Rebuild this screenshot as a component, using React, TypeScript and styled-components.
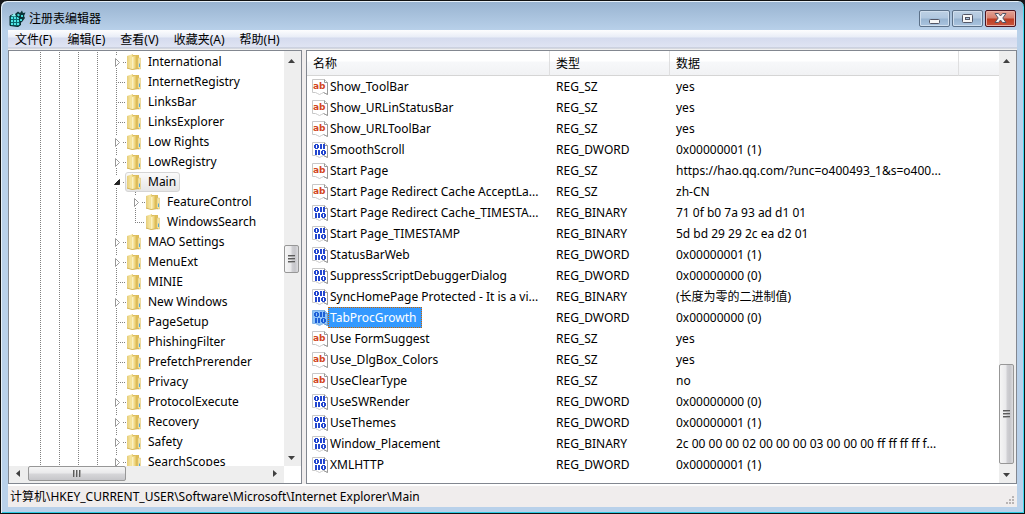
import React from "react";
import styled, { createGlobalStyle, css } from "styled-components";

const GlobalStyle = createGlobalStyle`
  * { box-sizing: border-box; }
  body {
    margin: 0;
    background: #16181c;
    color: #000;
    font: 12px/20px "Noto Sans", "Noto Sans CJK SC", sans-serif;
  }
  button { font: inherit; color: inherit; margin: 0; }
`;

/* ---------- window frame ---------- */

const Frame = styled.div`
  display: flex;
  flex-direction: column;
  height: 100vh;
  min-height: 300px;
  padding: 0 6px 6px;
  border: 1px solid #111;
  border-radius: 7px 7px 0 0;
  background: linear-gradient(#98b3d0 0, #b9d1ea 30px, #b9d1ea 100%);
  box-shadow: inset 1px 1px 0 #e6f0f8, inset -1px 0 0 #3fd8ee, inset 0 -1px 0 #2cc9e2;
`;

const TitleBar = styled.header`
  display: flex;
  align-items: center;
  gap: 3px;
  flex: none;
  height: 29px;
  padding: 6px 2px 0 2px;
`;

const Title = styled.h1`
  flex: 1;
  margin: 0;
  font-size: 12px;
  font-weight: 400;
  line-height: 20px;
`;

const WindowButtons = styled.div`
  display: flex;
  gap: 2px;
  height: 18px;
`;

const WindowButton = styled.button<{ $close?: boolean }>`
  display: grid;
  place-items: center;
  width: 31px;
  height: 17px;
  padding: 0;
  border: 1px solid ${(p) => (p.$close ? "#4b1420" : "#5c7189")};
  border-radius: 2px;
  background: ${(p) =>
    p.$close
      ? "linear-gradient(#e3a294 0, #d6806f 7px, #bd3c22 8px, #c9553c 100%)"
      : "linear-gradient(#bdd0e4 0, #b0c7df 7px, #98b4d1 8px, #aac4df 100%)"};
  box-shadow: inset 0 0 0 1px ${(p) => (p.$close ? "#e9aea3" : "#cfdeee")};
`;

const Client = styled.div`
  display: flex;
  flex-direction: column;
  flex: 1;
  min-height: 0;
  margin: 0 1px;
  background: #f0eded;
`;

const MenuBar = styled.nav`
  display: flex;
  gap: 1px;
  flex: none;
  height: 20px;
  background: linear-gradient(#fdfdfe 0, #e9edf7 7px, #d5dbee 8px, #dfe4f3 17px, #b9bfce 18px, #f0f0f0 19px);
`;

const MenuItem = styled.button`
  padding: 0 7px;
  border: 0;
  background: none;
  line-height: 20px;
  white-space: nowrap;
`;

const Panes = styled.main`
  display: grid;
  grid-template-columns: 294px minmax(0, 1fr);
  gap: 4px;
  flex: 1;
  min-height: 0;
`;

const Pane = styled.section`
  display: grid;
  grid-template-columns: minmax(0, 1fr) 17px;
  grid-template-rows: minmax(0, 1fr) auto;
  min-height: 0;
  border: 1px solid #828790;
  background: #fff;
  overflow: hidden;
`;

/* ---------- scroll bars ---------- */

const Track = styled.div<{ $horizontal?: boolean }>`
  display: flex;
  flex-direction: ${(p) => (p.$horizontal ? "row" : "column")};
  align-items: center;
  padding: ${(p) => (p.$horizontal ? "0 1px 2px" : "2px 2px 0 0")};
  background: #eee;
  min-width: 0;
  min-height: 0;
`;

const ArrowButton = styled.button<{ $horizontal?: boolean }>`
  display: grid;
  place-items: center;
  flex: none;
  width: ${(p) => (p.$horizontal ? 17 : 15)}px;
  height: ${(p) => (p.$horizontal ? 15 : 17)}px;
  padding: 0;
  border: 0;
  background: none;
`;

const Spacer = styled.div<{ $grow: number }>`
  flex: ${(p) => p.$grow} 1 0;
`;

const Thumb = styled.div<{ $horizontal?: boolean; $size: number }>`
  display: grid;
  place-items: center;
  flex: none;
  border: 1px solid #979797;
  border-radius: 2px;
  ${(p) =>
    p.$horizontal
      ? css`
          width: ${p.$size}px;
          height: 15px;
          background: linear-gradient(#f5f5f5 0, #e9e9eb 6px, #d6d6d9 7px, #c6c6ca 100%);
        `
      : css`
          width: 15px;
          height: ${p.$size}px;
          background: linear-gradient(90deg, #f5f5f5 0, #e9e9eb 6px, #d0d0d4 7px, #c6c6ca 10px, #dcdcdf 100%);
        `}
`;

const arrows = {
  up: "M0 5 3.5 1 7 5Z",
  down: "M0 2h7L3.5 6Z",
  left: "M5 0v7L1 3.5Z",
  right: "M2 0v7L6 3.5Z",
};

function Arrow({ dir }: { dir: keyof typeof arrows }) {
  return (
    <svg width="7" height="7" viewBox="0 0 7 7" aria-hidden="true">
      <path d={arrows[dir]} fill="#404040" />
    </svg>
  );
}

function Grip({ horizontal }: { horizontal?: boolean }) {
  return (
    <svg width="8" height="8" viewBox="0 0 8 8" shapeRendering="crispEdges" aria-hidden="true">
      {[0, 3, 6].map((n) =>
        horizontal ? (
          <g key={n}>
            <rect x={n} y="0" width="1" height="7" fill="#5c5c5c" />
            <rect x={n + 1} y="0" width="1" height="7" fill="#a9a9a9" />
          </g>
        ) : (
          <g key={n}>
            <rect x="0" y={n} width="7" height="1" fill="#5c5c5c" />
            <rect x="0" y={n + 1} width="7" height="1" fill="#a9a9a9" />
          </g>
        ),
      )}
    </svg>
  );
}

type ScrollBarProps = { horizontal?: boolean; size: number; before: number; after: number };

function ScrollBar({ horizontal, size, before, after }: ScrollBarProps) {
  return (
    <Track $horizontal={horizontal}>
      <ArrowButton $horizontal={horizontal} aria-label={horizontal ? "向左滚动" : "向上滚动"}>
        <Arrow dir={horizontal ? "left" : "up"} />
      </ArrowButton>
      <Spacer $grow={before} />
      <Thumb $horizontal={horizontal} $size={size}>
        <Grip horizontal={horizontal} />
      </Thumb>
      <Spacer $grow={after} />
      <ArrowButton $horizontal={horizontal} aria-label={horizontal ? "向右滚动" : "向下滚动"}>
        <Arrow dir={horizontal ? "right" : "down"} />
      </ArrowButton>
    </Track>
  );
}

/* ---------- key tree ---------- */

const Tree = styled.ul`
  margin: 0;
  padding: 1px 0 0 22px;
  list-style: none;
  overflow: hidden;
`;

const TreeRow = styled.li`
  display: flex;
  align-items: center;
  height: 20px;
`;

const TreeCell = styled.svg`
  flex: none;
  width: 19px;
  height: 20px;
`;

const TreeLabel = styled.span<{ $selected?: boolean }>`
  display: flex;
  align-items: center;
  gap: 7px;
  height: 20px;
  margin-left: -1px;
  padding: 0 3px 0 1px;
  border: 1px solid ${(p) => (p.$selected ? "#d5d5d5" : "transparent")};
  border-radius: 3px;
  background: ${(p) => (p.$selected ? "linear-gradient(#fafafa, #e6e6e6)" : "none")};
  line-height: 18px;
  white-space: nowrap;
`;

const dots = { stroke: "#808080", strokeDasharray: "1 1", shapeRendering: "crispEdges" as const };

function Guide() {
  return (
    <TreeCell viewBox="0 0 19 20" aria-hidden="true">
      <path d="M9.5 0V20" {...dots} />
    </TreeCell>
  );
}

type BranchState = "closed" | "open" | "leaf" | "last";

function Branch({ state }: { state: BranchState }) {
  if (state === "leaf" || state === "last") {
    return (
      <TreeCell viewBox="0 0 19 20" aria-hidden="true">
        <path d={state === "leaf" ? "M9.5 0V20" : "M9.5 0V11"} {...dots} />
        <path d="M11 10.5H19" {...dots} />
      </TreeCell>
    );
  }
  return (
    <TreeCell viewBox="0 0 19 20" aria-hidden="true">
      <path d="M9.5 0V4M9.5 16V20M16 10.5H19" {...dots} />
      {state === "closed" ? (
        <path d="M8.5 6.5V14.5L12.5 10.5Z" fill="#fff" stroke="#999" />
      ) : (
        <path d="M12.5 7.5V12.5H7.5Z" fill="#262626" stroke="#262626" strokeLinejoin="round" />
      )}
    </TreeCell>
  );
}

const FolderSvg = styled.svg`
  flex: none;
`;

function FolderIcon() {
  return (
    <FolderSvg width="14" height="16" viewBox="0 0 14 16" aria-hidden="true">
      <defs>
        <linearGradient id="folderBack" x1="0" x2="1" y1="0" y2="0">
          <stop offset="0" stopColor="#e6cd7a" />
          <stop offset="0.7" stopColor="#f8e8a4" />
          <stop offset="1" stopColor="#e2c565" />
        </linearGradient>
        <linearGradient id="folderFront" x1="0" x2="1" y1="0" y2="0">
          <stop offset="0" stopColor="#fdf7d2" />
          <stop offset="0.5" stopColor="#f0d987" />
          <stop offset="1" stopColor="#d9b44a" />
        </linearGradient>
      </defs>
      <path d="M6 1H12V15H6Z" fill="#dcbd5c" />
      <path d="M11 4H13.500V15H11Z" fill="#f3e5a6" stroke="#dcc06a" strokeWidth=".5" />
      <path d="M0 2 6 0V15L0 14.500Z" fill="url(#folderBack)" />
      <path d="M5 3 10 1V14L6 16 5 15Z" fill="url(#folderFront)" />
      <path d="M0 14 5 15.500 12 14.500" fill="none" stroke="#d6b65a" />
      <path d="M12.500 9.500V13" stroke="#5aa9d8" />
    </FolderSvg>
  );
}

type TreeNode = { name: string; state: BranchState; child?: boolean; selected?: boolean };

const tree: TreeNode[] = [
  { name: "International", state: "closed" },
  { name: "InternetRegistry", state: "leaf" },
  { name: "LinksBar", state: "leaf" },
  { name: "LinksExplorer", state: "leaf" },
  { name: "Low Rights", state: "closed" },
  { name: "LowRegistry", state: "closed" },
  { name: "Main", state: "open", selected: true },
  { name: "FeatureControl", state: "closed", child: true },
  { name: "WindowsSearch", state: "last", child: true },
  { name: "MAO Settings", state: "closed" },
  { name: "MenuExt", state: "closed" },
  { name: "MINIE", state: "leaf" },
  { name: "New Windows", state: "closed" },
  { name: "PageSetup", state: "leaf" },
  { name: "PhishingFilter", state: "leaf" },
  { name: "PrefetchPrerender", state: "leaf" },
  { name: "Privacy", state: "leaf" },
  { name: "ProtocolExecute", state: "closed" },
  { name: "Recovery", state: "closed" },
  { name: "Safety", state: "closed" },
  { name: "SearchScopes", state: "closed" },
];

/* ---------- value list ---------- */

const Values = styled.div`
  overflow: hidden;
`;

const Table = styled.table`
  width: 100%;
  border-collapse: separate;
  border-spacing: 0;
  table-layout: fixed;
  white-space: nowrap;
`;

const HeadCell = styled.th<{ $width?: number; $last?: boolean }>`
  width: ${(p) => (p.$width ? `${p.$width}px` : "auto")};
  height: 25px;
  padding: 1px 6px 0;
  border-right: ${(p) => (p.$last ? "0" : "1px solid #dfdfe0")};
  border-bottom: 1px solid #d5d5d5;
  background: linear-gradient(#fff 0, #fff 10px, #f7f8fa 11px, #f1f2f4 100%);
  font-weight: 400;
  line-height: 23px;
  text-align: left;
`;

const Cell = styled.td`
  height: 21px;
  padding: 0 6px;
  overflow: hidden;
  line-height: 21px;
`;

const NameCell = styled(Cell)`
  padding: 0 0 0 5px;
`;

const NameBox = styled.div`
  display: flex;
  align-items: center;
  height: 21px;
`;

const ValueName = styled.span<{ $selected?: boolean }>`
  height: 21px;
  padding: 0 5px 0 1px;
  border: 1px dotted transparent;
  line-height: 19px;
  ${(p) =>
    p.$selected &&
    css`
      border-color: #cc6600;
      background: #3399ff;
      color: #fff;
    `}
`;

const IconSvg = styled.svg`
  flex: none;
`;

const IconText = styled.text`
  font-family: "DejaVu Sans", sans-serif;
  font-size: 9px;
  font-weight: 700;
`;

/* one digit zero, 5 x 5, with its top left corner at (x, y) */
const zero = (x: number, y: number) => `M${x + 1} ${y}h3v1h1v3h-1v1h-3v-1h-1v-3h1zM${x + 2} ${y + 1}v3h1v-3z`;

function ValueIcon({ kind, selected }: { kind: "text" | "binary"; selected?: boolean }) {
  return (
    <IconSvg width="16" height="16" viewBox="0 0 16 16" aria-hidden="true">
      <path
        d="M.5.5H12.500L15.500 3.500V15.500L13.500 14.500 11.500 13.500 9.500 14.500 7.500 15.500 5.500 14.500 3.500 13.500H.5Z"
        fill={selected ? "#8fc4f8" : "#fff"}
        stroke={selected ? "#7fb2e6" : "#c8c8c8"}
      />
      <path
        d="M12.500.5V3.500H15.500V15.500L11.500 13.500"
        fill="none"
        stroke={selected ? "#5f97cf" : "#999"}
      />
      {kind === "text" ? (
        <IconText x="1" y="10" fill="#d2451e">
          ab
        </IconText>
      ) : (
        <path
          d={`${zero(2, 2)}${zero(9, 8)}M8 2h2v5h-2zM11 2h2v5h-2zM3 8h2v5h-2zM6 8h2v5h-2z`}
          fill={selected ? "#1c5fd8" : "#2447cf"}
          fillRule="evenodd"
          shapeRendering="crispEdges"
        />
      )}
    </IconSvg>
  );
}

type RegistryValue = [name: string, type: string, data: string];

const values: RegistryValue[] = [
  ["Show_ToolBar", "REG_SZ", "yes"],
  ["Show_URLinStatusBar", "REG_SZ", "yes"],
  ["Show_URLToolBar", "REG_SZ", "yes"],
  ["SmoothScroll", "REG_DWORD", "0x00000001 (1)"],
  ["Start Page", "REG_SZ", "https://hao.qq.com/?unc=o400493_1&s=o400..."],
  ["Start Page Redirect Cache AcceptLa...", "REG_SZ", "zh-CN"],
  ["Start Page Redirect Cache_TIMESTA...", "REG_BINARY", "71 0f b0 7a 93 ad d1 01"],
  ["Start Page_TIMESTAMP", "REG_BINARY", "5d bd 29 29 2c ea d2 01"],
  ["StatusBarWeb", "REG_DWORD", "0x00000001 (1)"],
  ["SuppressScriptDebuggerDialog", "REG_DWORD", "0x00000000 (0)"],
  ["SyncHomePage Protected - It is a vi...", "REG_BINARY", "(长度为零的二进制值)"],
  ["TabProcGrowth", "REG_DWORD", "0x00000000 (0)"],
  ["Use FormSuggest", "REG_SZ", "yes"],
  ["Use_DlgBox_Colors", "REG_SZ", "yes"],
  ["UseClearType", "REG_SZ", "no"],
  ["UseSWRender", "REG_DWORD", "0x00000000 (0)"],
  ["UseThemes", "REG_DWORD", "0x00000001 (1)"],
  ["Window_Placement", "REG_BINARY", "2c 00 00 00 02 00 00 00 03 00 00 00 ff ff ff ff f..."],
  ["XMLHTTP", "REG_DWORD", "0x00000001 (1)"],
];

/* ---------- status bar ---------- */

const StatusBar = styled.footer`
  display: flex;
  align-items: center;
  justify-content: space-between;
  flex: none;
  height: 23px;
  padding: 0 2px;
  border-top: 2px solid #fff;
  background: #f0eded;
  white-space: nowrap;
`;

const SizeGrip = styled.svg`
  align-self: flex-end;
  margin-bottom: 2px;
`;

function RegistryIcon() {
  return (
    <svg width="17" height="17" viewBox="0 0 17 17" aria-hidden="true">
      <path d="M1 6 4 4.500 11 6 11.500 15 9 16.500 1 15.500Z" fill="#0b6a70" stroke="#04282b" />
      <g fill="#4fe6e6">
        <path d="M2 7h2v2H2zM5 7h2v2H5zM8 7h2v2H8zM2 10h2v2H2zM5 10h2v2H5zM8 10h2v2H8zM2 13h2v2H2zM5 13h2v2H5zM8 13h2v2H8z" />
      </g>
      <path d="M2 6 5 3.500 8 5 6 6.500Z" fill="#8ff0ee" />
      <path d="M6 4 9 1.500 11 3 13 .5 14 3 16.500 2.500 15 6 16 8 13 12 11 13 10 8 7 6Z" fill="#0a3438" />
      <path d="M9 3.500 11 5 9.500 6.500 8 5ZM12 5h2v2h-2zM11 9h2v2h-2z" fill="#42dada" />
    </svg>
  );
}

function MinimizeGlyph() {
  return (
    <svg width="13" height="13" viewBox="0 0 13 13" aria-hidden="true">
      <rect x="1.500" y="7.500" width="10" height="4" rx="1" fill="#f7f7f7" stroke="#535666" />
    </svg>
  );
}

function MaximizeGlyph() {
  return (
    <svg width="11" height="9" viewBox="0 0 11 9" aria-hidden="true">
      <rect x=".5" y=".5" width="10" height="8" rx="1" fill="#f7f7f7" stroke="#535666" />
      <rect x="3.500" y="3.500" width="4" height="2" fill="#a9c3de" stroke="#535666" />
    </svg>
  );
}

function CloseGlyph() {
  return (
    <svg width="13" height="11" viewBox="0 0 13 11" aria-hidden="true">
      <path
        d="M1 .5H4.500L6.500 3 8.500 .5H12L8.800 5 12 9.500H8.500L6.500 7 4.500 9.500H1L4.200 5Z"
        fill="#f7f7f7"
        stroke="#535666"
        strokeLinejoin="round"
      />
    </svg>
  );
}

export default function App() {
  return (
    <>
      <GlobalStyle />
      <Frame>
        <TitleBar>
          <RegistryIcon />
          <Title>注册表编辑器</Title>
          <WindowButtons>
            <WindowButton aria-label="最小化">
              <MinimizeGlyph />
            </WindowButton>
            <WindowButton aria-label="最大化">
              <MaximizeGlyph />
            </WindowButton>
            <WindowButton $close aria-label="关闭">
              <CloseGlyph />
            </WindowButton>
          </WindowButtons>
        </TitleBar>
        <Client>
          <MenuBar>
            {["文件(F)", "编辑(E)", "查看(V)", "收藏夹(A)", "帮助(H)"].map((item) => (
              <MenuItem key={item}>{item}</MenuItem>
            ))}
          </MenuBar>
          <Panes>
            <Pane>
              <Tree>
                {tree.map((node) => (
                  <TreeRow key={node.name}>
                    <Guide />
                    <Guide />
                    <Guide />
                    <Guide />
                    {node.child && <Guide />}
                    <Branch state={node.state} />
                    <TreeLabel $selected={node.selected}>
                      <FolderIcon />
                      {node.name}
                    </TreeLabel>
                  </TreeRow>
                ))}
              </Tree>
              <ScrollBar size={28} before={175} after={176} />
              <ScrollBar horizontal size={98} before={1} after={140} />
            </Pane>
            <Pane>
              <Values>
                <Table>
                  <thead>
                    <tr>
                      <HeadCell $width={243}>名称</HeadCell>
                      <HeadCell $width={120}>类型</HeadCell>
                      <HeadCell>数据</HeadCell>
                      <HeadCell as="td" $width={40} $last />
                    </tr>
                  </thead>
                  <tbody>
                    {values.map(([name, type, data]) => {
                      const selected = name === "TabProcGrowth";
                      return (
                        <tr key={name}>
                          <NameCell>
                            <NameBox>
                              <ValueIcon kind={type === "REG_SZ" ? "text" : "binary"} selected={selected} />
                              <ValueName $selected={selected}>{name}</ValueName>
                            </NameBox>
                          </NameCell>
                          <Cell>{type}</Cell>
                          <Cell>{data}</Cell>
                          <td />
                        </tr>
                      );
                    })}
                  </tbody>
                </Table>
              </Values>
              <ScrollBar size={100} before={295} after={2} />
            </Pane>
          </Panes>
          <StatusBar>
            <span>计算机\HKEY_CURRENT_USER\Software\Microsoft\Internet Explorer\Main</span>
            <SizeGrip width="10" height="10" viewBox="0 0 10 10" fill="#b8b4b4" aria-hidden="true">
              <path d="M7 1h2v2H7zM4 4h2v2H4zM7 4h2v2H7zM1 7h2v2H1zM4 7h2v2H4zM7 7h2v2H7z" />
            </SizeGrip>
          </StatusBar>
        </Client>
      </Frame>
    </>
  );
}
